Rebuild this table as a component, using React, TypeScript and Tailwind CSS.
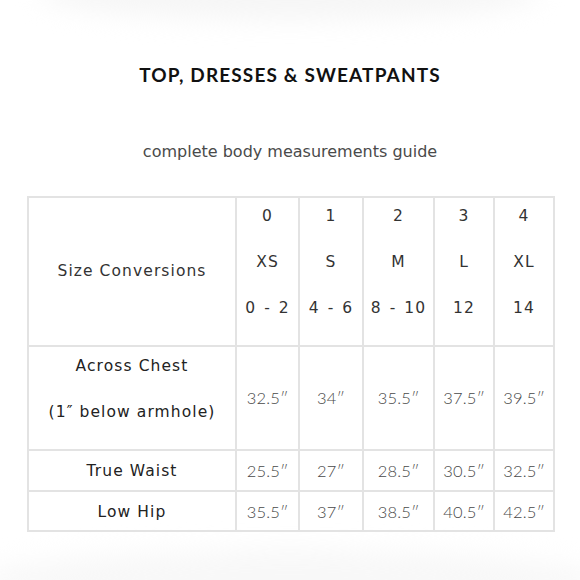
const sizes = [
  { n: "0", l: "XS", r: "0 - 2", chest: "32.5″", waist: "25.5″", hip: "35.5″" },
  { n: "1", l: "S", r: "4 - 6", chest: "34″", waist: "27″", hip: "37″" },
  { n: "2", l: "M", r: "8 - 10", chest: "35.5″", waist: "28.5″", hip: "38.5″" },
  { n: "3", l: "L", r: "12", chest: "37.5″", waist: "30.5″", hip: "40.5″" },
  { n: "4", l: "XL", r: "14", chest: "39.5″", waist: "32.5″", hip: "42.5″" },
];

const widths = ["w-[63px]", "w-[64px]", "w-[71px]", "w-[60px]", "w-[60px]"];

const cell = "border-2 border-[#e3e3e3] p-0 text-center";
const label = "font-['DejaVu_Sans',sans-serif] text-[15.5px] tracking-[0.07em] text-[#222]";
const value = "font-['Lato',sans-serif] text-[16.5px] font-light tracking-[0.01em] text-[#484848]";

export default function App() {
  return (
    <div className="relative h-[580px] w-[580px] overflow-hidden bg-white font-['Lato',sans-serif] text-[#2a2a2a]">
      <div className="absolute left-[40px] right-[40px] -top-[30px] h-[50px] rounded-[50%] bg-[#f6f6f6] blur-md" />
      <div className="absolute -left-[20px] -right-[20px] -bottom-[30px] h-[60px] rounded-[50%] bg-[#f8f8f8] blur-md" />

      <div className="relative flex flex-col items-center">
        <h1 className="mt-[63px] text-[19px] font-bold leading-[24px] tracking-[0.06em] text-[#111]">
          TOP, DRESSES &amp; SWEATPANTS
        </h1>
        <p className="mt-[55px] font-['DejaVu_Sans',sans-serif] text-[16px] leading-[20px] text-[#4a4a4a]">
          complete body measurements guide
        </p>

        <table className="mt-[34px] self-start ml-[27px] border-collapse">
          <tbody>
            <tr className="h-[149px]">
              <td className={`${cell} ${label} w-[208px] align-middle text-[#333]`}>Size Conversions</td>
              {sizes.map((s, i) => (
                <td key={s.n} className={`${cell} ${label} ${widths[i]} align-top tracking-[0.03em] text-[#333]`}>
                  <div className="flex flex-col gap-[26px] pt-[8px] leading-[20px] [word-spacing:2px]">
                    <span>{s.n}</span>
                    <span>{s.l}</span>
                    <span className="whitespace-nowrap">{s.r}</span>
                  </div>
                </td>
              ))}
            </tr>
            <tr className="h-[104px]">
              <td className={`${cell} ${label} align-top`}>
                <div className="flex flex-col gap-[26px] pt-[9px] leading-[20px]">
                  <span>Across Chest</span>
                  <span>(1″ below armhole)</span>
                </div>
              </td>
              {sizes.map((s) => (
                <td key={s.n} className={`${cell} ${value} align-middle`}>{s.chest}</td>
              ))}
            </tr>
            <tr className="h-[41px]">
              <td className={`${cell} ${label} align-middle pt-[2px]`}>True Waist</td>
              {sizes.map((s) => (
                <td key={s.n} className={`${cell} ${value} align-middle pt-[2px]`}>{s.waist}</td>
              ))}
            </tr>
            <tr className="h-[40px]">
              <td className={`${cell} ${label} align-middle pt-[3px]`}>Low Hip</td>
              {sizes.map((s) => (
                <td key={s.n} className={`${cell} ${value} align-middle pt-[2px]`}>{s.hip}</td>
              ))}
            </tr>
          </tbody>
        </table>
      </div>
    </div>
  );
}
